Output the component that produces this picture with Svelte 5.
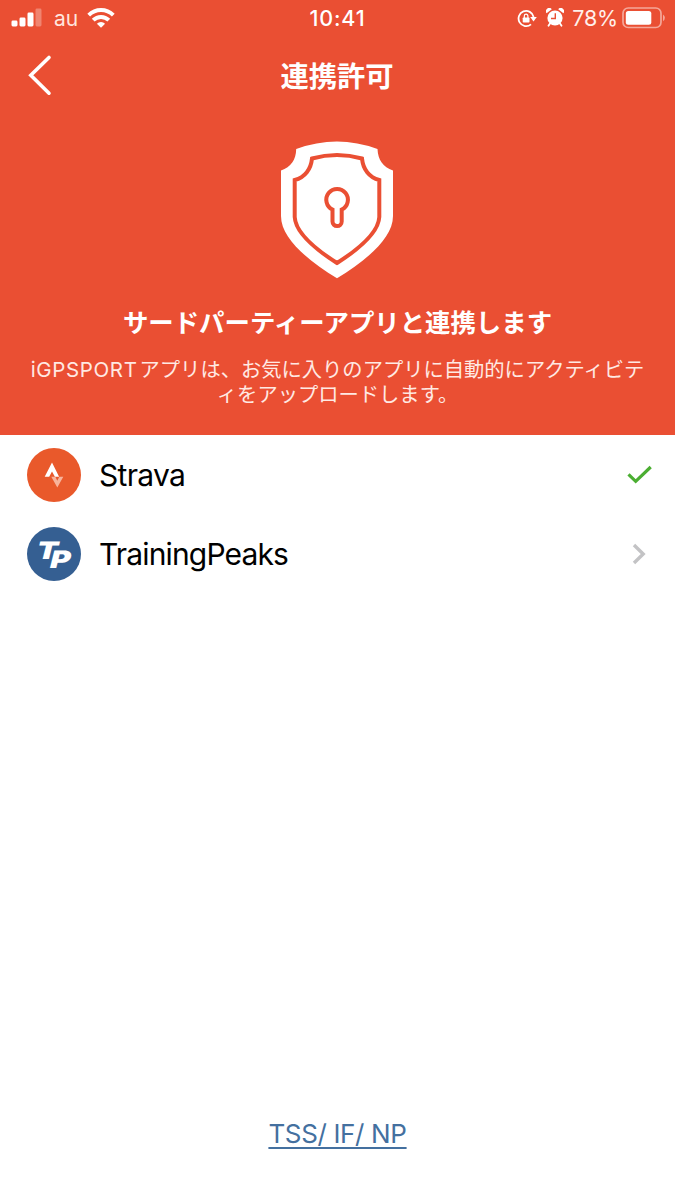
<script>
  const apps = [
    { id: 'strava', name: 'Strava', linked: true },
    { id: 'trainingpeaks', name: 'TrainingPeaks', linked: false }
  ];
</script>

<div class="screen">
  <header>
    <div class="status">
      <div class="side">
        <svg class="signal" width="32" height="20" viewBox="0 0 32 20" fill="#fff">
          <rect x="0.5" y="12.5" width="6" height="6" rx="1.4" />
          <rect x="8.5" y="9.5" width="6" height="9" rx="1.4" />
          <rect x="16.5" y="4.5" width="6" height="14" rx="1.4" />
          <rect x="24.5" y="0.5" width="6" height="18" rx="1.4" opacity=".3" />
        </svg>
        <span class="carrier">au</span>
        <svg class="wifi" width="28" height="20" viewBox="0 0 28 20" fill="none" stroke="#fff" stroke-width="3.9">
          <path d="M1.7 7.1a17.4 17.4 0 0 1 24.6 0" />
          <path d="M6.2 12.2a11 11 0 0 1 15.6 0" />
          <path d="M14 19.8l-4.1-4.1a5.8 5.8 0 0 1 8.2 0z" fill="#fff" stroke="none" />
        </svg>
      </div>
      <span class="time">10:41</span>
      <div class="side right">
        <svg width="20" height="19" viewBox="0 0 20 19" fill="none" stroke="#fff" stroke-width="1.8">
          <path d="M14 15.4A7.6 7.6 0 1 1 16.6 8" />
          <path d="M13.2 8h6.6l-3.3 4.4z" fill="#fff" stroke="none" />
          <rect x="5.7" y="8.5" width="6.8" height="5" rx=".8" fill="#fff" stroke="none" />
          <path d="M7.3 9V7a1.8 1.8 0 0 1 3.6 0v2" stroke-width="1.2" />
        </svg>
        <svg class="alarm" width="18" height="19" viewBox="0 0 18 19" fill="#fff">
          <circle cx="9" cy="10" r="7.6" />
          <path d="M.6 5.3A3.2 3.2 0 0 1 5.8 1.2zM17.4 5.3A3.2 3.2 0 0 0 12.2 1.2z" />
          <path d="M4 15.5l-1.5 2.3M14 15.5l1.5 2.3" stroke="#fff" stroke-width="1.8" stroke-linecap="round" />
          <path d="M9.3 5.2v5.3H5" fill="none" stroke="#ea4f33" stroke-width="1.4" />
        </svg>
        <span class="percent">78%</span>
        <svg class="battery" width="44" height="22" viewBox="0 0 44 22">
          <rect x="1" y="1" width="38" height="19.5" rx="5.2" fill="none" stroke="#fff" stroke-opacity=".5" stroke-width="1.7" />
          <rect x="3.8" y="4" width="25.5" height="13.7" rx="2.5" fill="#fff" />
          <path d="M41 7.4a4 4 0 0 1 0 6.8z" fill="#fff" opacity=".5" />
        </svg>
      </div>
    </div>

    <nav>
      <svg class="back" width="26" height="42" viewBox="0 0 26 42" fill="none" stroke="#fff" stroke-width="3.6" stroke-linecap="round">
        <path d="M21 3.5L2.8 21.3 21 39.2" />
      </svg>
      <h1>連携許可</h1>
    </nav>

    <svg class="shield" width="114" height="138" viewBox="0 0 114 138">
      <path d="M16.2 8Q57-7 97.5 8C98 19 103 26 113 29.5V75C113 98 85 120 57 137.3C29 120 1 98 1 75V29.5C11 26 16 19 16.2 8Z" fill="#fff" />
      <g fill="none" stroke="#ea4f33" stroke-width="4">
        <path d="M32 17.5Q57 10.5 82 17.5C83 28 89 36.5 99.3 39V76C98.5 91 79 108 57 122C35 108 15.5 91 14.7 76V39C25 36.5 31 28 32 17.5Z" />
        <path d="M52.5 68.5A10.8 10.8 0 1 1 61.7 68.5V80.5A4.6 4.6 0 0 1 52.5 80.5Z" />
      </g>
    </svg>

    <h2>サードパーティーアプリと連携します</h2>
    <p><span class="brand">iGPSPORT</span>アプリは、お気に入りのアプリに自動的にアクティビテ<br />ィをアップロードします。</p>
  </header>

  <main>
    {#each apps as app (app.id)}
      <div class="row">
        <svg class="logo" width="54" height="54" viewBox="0 0 54 54">
          {#if app.id === 'strava'}
            <circle cx="27" cy="27" r="27" fill="#e9592b" />
            <path d="M24.3 28.8h4l2 4 2-4h4l-6 10.6z" fill="#f7b39b" />
            <path d="M17.7 28.8L25 14.5l7.1 14.3h-4.2L25 23.4l-2.8 5.4z" fill="#fff" />
          {:else}
            <circle cx="27" cy="27" r="27" fill="#355f92" />
            <text class="mark" transform="skewX(-14) scale(1.3 1)"><tspan x="12.4" y="32.4">T</tspan><tspan x="24.3" y="40.6">P</tspan></text>
          {/if}
        </svg>
        <span class="name {app.id}">{app.name}</span>
        {#if app.linked}
          <svg class="check" width="26" height="20" viewBox="0 0 26 20" fill="none" stroke="#4bae32" stroke-width="3.2">
            <path d="M2.5 9.3l7.2 7L24.7 2" />
          </svg>
        {:else}
          <svg class="chevron" width="14" height="22" viewBox="0 0 14 22" fill="none" stroke="#c3c3c5" stroke-width="3.4">
            <path d="M2 2l9.2 9L2 20" />
          </svg>
        {/if}
      </div>
    {/each}
  </main>

  <footer><span class="link">TSS/ IF/ NP</span></footer>
</div>

<style>
  :global(body) { margin: 0; background: #fff; }
  .screen {
    width: 675px;
    height: 1200px;
    display: flex;
    flex-direction: column;
    background: #fff;
    color: #000;
    font-family: Inter, "Noto Sans CJK JP", sans-serif;
    overflow: hidden;
  }
  svg { display: block; flex: none; }
  header {
    height: 435px;
    flex: none;
    background: #ea4f33;
    color: #fff;
    display: flex;
    flex-direction: column;
    align-items: center;
  }
  .status {
    width: 675px;
    height: 37px;
    flex: none;
    display: grid;
    grid-template-columns: 1fr auto 1fr;
    align-items: center;
    font-size: 21.5px;
  }
  .side { display: flex; align-items: center; padding-left: 11px; }
  .right { justify-content: flex-end; padding: 0 9px 0 0; }
  .signal { margin-top: -2px; }
  .carrier { margin-left: 11px; width: 33px; color: #ffe5de; font-size: 21px; }
  .wifi { margin-top: -2px; }
  .time { font-weight: 500; letter-spacing: .8px; margin-top: -2px; }
  .alarm { margin-left: 9px; margin-top: -2px; }
  .percent { margin: -2px 4px 0 8px; color: #fff0eb; letter-spacing: -.2px; }
  .battery { margin-top: -1px; }
  nav {
    width: 675px;
    height: 76px;
    flex: none;
    display: grid;
    grid-template-columns: 1fr auto 1fr;
    align-items: center;
  }
  .back { margin-left: 28px; }
  h1 { margin: 4px 1px 0 0; font-size: 28.3px; line-height: 40px; font-weight: 700; }
  .shield { margin: 28px 1px 0 0; }
  h2 { margin: 26px 0 0; font-size: 25.4px; line-height: 36px; font-weight: 700; white-space: nowrap; }
  p {
    margin: 16px 0 0;
    font-size: 20.3px;
    line-height: 25px;
    font-weight: 400;
    text-align: center;
    white-space: nowrap;
    color: #ffe9e3;
  }
  .brand { font-size: 20.5px; letter-spacing: .65px; margin-right: 2px; }
  main { flex: 1; }
  .row { height: 79px; display: flex; align-items: center; padding: 0 23px 0 27px; }
  .name { margin-left: 18px; font-size: 30px; flex: 1; }
  .strava { letter-spacing: -.7px; }
  .trainingpeaks { letter-spacing: -.85px; }
  .chevron { margin-right: 6px; }
  .mark { font-family: Inter, sans-serif; font-size: 24px; font-weight: 900; fill: #fff; }
  footer { height: 85px; flex: none; text-align: center; color: #44709f; font-size: 26px; line-height: 38px; }
  .link { text-decoration: underline; text-decoration-thickness: 2px; text-underline-offset: 4px; letter-spacing: -.35px; }
</style>
